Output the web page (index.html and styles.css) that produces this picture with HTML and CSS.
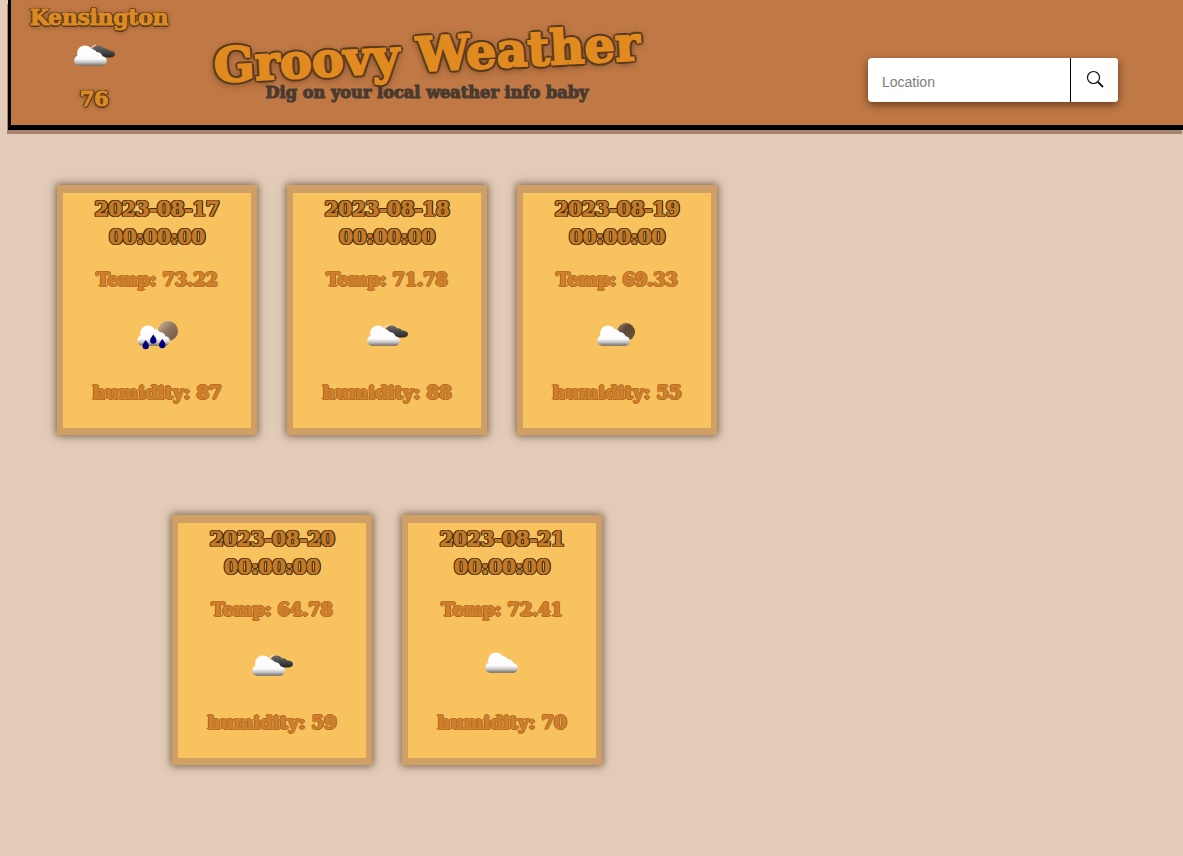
FILE: index.html
```html
<!DOCTYPE html>
<html lang="en">
<head>
<meta charset="utf-8">
<title>Groovy Weather</title>
<link rel="stylesheet" href="styles.css">
</head>
<body>
<svg class="defs" width="0" height="0" aria-hidden="true">
  <defs>
    <linearGradient id="cloudFill" gradientUnits="userSpaceOnUse" x1="0" y1="14" x2="0" y2="35">
      <stop offset="0" stop-color="#ffffff"/>
      <stop offset="0.66" stop-color="#fbfbfb"/>
      <stop offset="0.84" stop-color="#bdbdbd"/>
      <stop offset="1" stop-color="#6a655f"/>
    </linearGradient>
    <linearGradient id="darkFill" x1="0" y1="0" x2="0" y2="1">
      <stop offset="0" stop-color="#6d6d6d"/>
      <stop offset="1" stop-color="#262626"/>
    </linearGradient>
    <linearGradient id="moonFill" x1="0" y1="0" x2="1" y2="1">
      <stop offset="0" stop-color="#d0bda6"/>
      <stop offset="0.45" stop-color="#94785f"/>
      <stop offset="1" stop-color="#6a5442"/>
    </linearGradient>
    <linearGradient id="moonDarkFill" x1="0" y1="0" x2="1" y2="1">
      <stop offset="0" stop-color="#a08a72"/>
      <stop offset="0.4" stop-color="#5e4534"/>
      <stop offset="1" stop-color="#6e5440"/>
    </linearGradient>
    <symbol id="white-cloud" viewBox="0 0 50 50">
      <g fill="url(#cloudFill)">
        <circle cx="16" cy="22.500" r="8"/>
        <circle cx="10.500" cy="29.500" r="5.300"/>
        <circle cx="22" cy="25" r="7"/>
        <circle cx="28" cy="26.500" r="5.500"/>
        <circle cx="33" cy="30" r="4.800"/>
        <rect x="10.500" y="25" width="22.500" height="9.800"/>
      </g>
    </symbol>
    <symbol id="dark-cloud" viewBox="0 0 50 50">
      <path fill="none" stroke="#e8e8e8" stroke-width="1" d="M21.500 19.500c.5-3 2.500-5 5.500-5.500"/>
      <path fill="url(#darkFill)" d="M23 20c1-3 3-5.500 6-5.500 3 0 5 1 6 3 2-.5 4 .5 5 2 3.500 0 6 1.500 6 3.500 0 2-2 3.500-5 3.500h-9c-2-3-5-5.500-9-6.500z"/>
    </symbol>
    <symbol id="moon" viewBox="0 0 50 50">
      <circle cx="36" cy="20" r="10" fill="url(#moonFill)"/>
    </symbol>
    <symbol id="moon-dark" viewBox="0 0 50 50">
      <circle cx="34" cy="21" r="9" fill="url(#moonDarkFill)"/>
    </symbol>
    <symbol id="drops" viewBox="0 0 50 50">
      <path fill="#00007f" d="M13.700 29c2.200 3 3.200 4.500 3.200 6a3.200 3.200 0 0 1-6.400 0c0-1.500 1-3 3.200-6zM21.300 23.500c2.200 3 3.200 4.500 3.200 6a3.200 3.200 0 0 1-6.400 0c0-1.500 1-3 3.200-6zM30.300 28c2.200 3 3.200 4.500 3.200 6a3.200 3.200 0 0 1-6.400 0c0-1.500 1-3 3.200-6z"/>
    </symbol>
  </defs>
</svg>

<header class="banner">
  <div class="current">
    <div class="current-city">Kensington</div>
    <svg class="icon" viewBox="0 0 50 50"><use href="#dark-cloud"/><use href="#white-cloud"/></svg>
    <div class="current-temp">76</div>
  </div>
  <div class="brand">
    <h1 class="brand-title">Groovy Weather</h1>
    <p class="brand-sub">Dig on your local weather info baby</p>
  </div>
  <form class="search">
    <input class="search-input" type="text" placeholder="Location">
    <button class="search-button" type="button" aria-label="Search">
      <svg class="search-icon" viewBox="0 0 18 18"><circle cx="7.500" cy="7.500" r="6" fill="none" stroke="#111" stroke-width="1.200"/><path d="M12 12l5 5" stroke="#111" stroke-width="1.800"/></svg>
    </button>
  </form>
</header>

<main class="forecast">
  <article class="card"><div class="card-inner">
    <h2 class="card-date">2023-08-17 00:00:00</h2>
    <p class="card-temp">Temp: 73.22</p>
    <svg class="icon card-icon" viewBox="0 0 50 50"><use href="#moon"/><use href="#white-cloud"/><use href="#drops"/></svg>
    <p class="card-humidity">humidity: 87</p>
  </div></article>
  <article class="card"><div class="card-inner">
    <h2 class="card-date">2023-08-18 00:00:00</h2>
    <p class="card-temp">Temp: 71.78</p>
    <svg class="icon card-icon" viewBox="0 0 50 50"><use href="#dark-cloud"/><use href="#white-cloud"/></svg>
    <p class="card-humidity">humidity: 88</p>
  </div></article>
  <article class="card"><div class="card-inner">
    <h2 class="card-date">2023-08-19 00:00:00</h2>
    <p class="card-temp">Temp: 69.33</p>
    <svg class="icon card-icon" viewBox="0 0 50 50"><use href="#moon-dark"/><use href="#white-cloud"/></svg>
    <p class="card-humidity">humidity: 55</p>
  </div></article>
  <article class="card"><div class="card-inner">
    <h2 class="card-date">2023-08-20 00:00:00</h2>
    <p class="card-temp">Temp: 64.78</p>
    <svg class="icon card-icon" viewBox="0 0 50 50"><use href="#dark-cloud"/><use href="#white-cloud"/></svg>
    <p class="card-humidity">humidity: 59</p>
  </div></article>
  <article class="card"><div class="card-inner">
    <h2 class="card-date">2023-08-21 00:00:00</h2>
    <p class="card-temp">Temp: 72.41</p>
    <svg class="icon card-icon card-icon-plain" viewBox="0 0 50 50"><use href="#white-cloud"/></svg>
    <p class="card-humidity">humidity: 70</p>
  </div></article>
</main>
</body>
</html>
```
FILE: styles.css
```css
* { box-sizing: border-box; }
html, body { margin: 0; padding: 0; }
body {
  background: #e2ccb8;
  height: 856px;
  overflow: hidden;
  font-family: "DejaVu Serif", "Liberation Serif", serif;
  font-weight: 700;
}
.defs { display: block; height: 0; }

.banner {
  display: flex;
  align-items: flex-start;
  margin-left: 8px;
  height: 130px;
  background: #c07945;
  border-left: 3px solid #000;
  border-bottom: 5px solid #000;
  box-shadow: -1px 4px 0 #a68471;
}
.current {
  width: 166px;
  flex: none;
  display: flex;
  flex-direction: column;
  align-items: center;
  padding-top: 4px;
}
.current-city,
.current-temp {
  font-size: 22px;
  line-height: 27px;
  letter-spacing: -0.3px;
  color: #dc8a22;
  -webkit-text-stroke: 1px #dc8a22;
  text-shadow: 1.500px 0 0 #5a3a1e, -1.500px 0 0 #5a3a1e, 0 1.500px 0 #5a3a1e, 0 -1.500px 0 #5a3a1e, 1.200px 1.200px 0 #5a3a1e, -1.200px -1.200px 0 #5a3a1e, 1.200px -1.200px 0 #5a3a1e, -1.200px 1.200px 0 #5a3a1e, 0 1px 5px #4a2e18;
}
.current-city { margin-left: 10px; }
.current-temp { margin-top: 4px; font-size: 21px; }
.icon { display: block; width: 50px; height: 50px; flex: none; }

.brand {
  width: 440px;
  flex: none;
  margin-left: 30px;
  padding-top: 26px;
  text-align: center;
}
.brand-title {
  margin: 0;
  font-size: 47.500px;
  line-height: 56px;
  white-space: nowrap;
  letter-spacing: 0.3px;
  color: #e08a1f;
  -webkit-text-stroke: 2px #e08a1f;
  text-shadow: 3px 0 0 #5a3a1e, -3px 0 0 #5a3a1e, 0 3px 0 #5a3a1e, 0 -3px 0 #5a3a1e, 2.200px 2.200px 0 #5a3a1e, -2.200px -2.200px 0 #5a3a1e, 2.200px -2.200px 0 #5a3a1e, -2.200px 2.200px 0 #5a3a1e, 0 2px 8px #4a2e18;
  transform: rotate(-3deg);
}
.brand-sub {
  margin: 0;
  font-size: 16.200px;
  line-height: 22px;
  white-space: nowrap;
  color: #4a3a30;
  -webkit-text-stroke: 1.100px #4a3a30;
}

.search {
  display: flex;
  width: 250px;
  height: 44px;
  margin: 58px 65px 0 auto;
  background: #fff;
  border-radius: 4px;
  box-shadow: 0 3px 8px rgba(60, 30, 10, 0.7);
  overflow: hidden;
}
.search-input {
  flex: 1;
  min-width: 0;
  padding: 4px 14px 0;
  border: 0;
  outline: 0;
  background: transparent;
  font-family: "Liberation Sans", Arial, sans-serif;
  font-size: 14px;
  font-weight: 400;
}
.search-input::placeholder { color: #7d7d7d; opacity: 1; }
.search-button {
  display: flex;
  justify-content: center;
  padding: 12px 0 0;
  width: 48px;
  flex: none;
  background: #fff;
  border: 0;
  border-left: 1px solid #000;
}
.search-icon { width: 18px; height: 18px; }

.forecast {
  display: flex;
  flex-wrap: wrap;
  justify-content: center;
  width: 690px;
  margin: 55px 0 0 42px;
}
.card {
  width: 200px;
  height: 250px;
  margin: 0 15px 80px;
  padding: 8px 6px 7px;
  background: #cf9f65;
  box-shadow: 0 0 8px 1px rgba(70, 45, 25, 0.7);
}
.card-inner {
  height: 100%;
  display: flex;
  flex-direction: column;
  align-items: center;
  background: #f8c25f;
  text-align: center;
}
.card-date {
  margin: 2px 0 0;
  width: 160px;
  font-size: 20px;
  line-height: 28px;
  letter-spacing: -0.3px;
  color: #c47a26;
  -webkit-text-stroke: 0.8px #c47a26;
  text-shadow: 1.400px 0 0 #3e2a10, -1.400px 0 0 #3e2a10, 0 1.400px 0 #3e2a10, 0 -1.400px 0 #3e2a10, 1.100px 1.100px 0 #3e2a10, -1.100px -1.100px 0 #3e2a10, 1.100px -1.100px 0 #3e2a10, -1.100px 1.100px 0 #3e2a10;
}
.card-temp,
.card-humidity {
  font-size: 18px;
  line-height: 24px;
  letter-spacing: -0.2px;
  white-space: nowrap;
  color: #d07f2a;
  -webkit-text-stroke: 1px #d07f2a;
  text-shadow: 1.200px 0 0 #9a5c1c, -1.200px 0 0 #9a5c1c, 0 1.200px 0 #9a5c1c, 0 -1.200px 0 #9a5c1c;
}
.card-temp { margin: 17px 0 0; }
.card-icon { margin-top: 19px; }
.card-icon-plain { transform: translate(3px, -3px); }
.card-humidity { margin: 20px 0 0; font-size: 18.500px; }
```
